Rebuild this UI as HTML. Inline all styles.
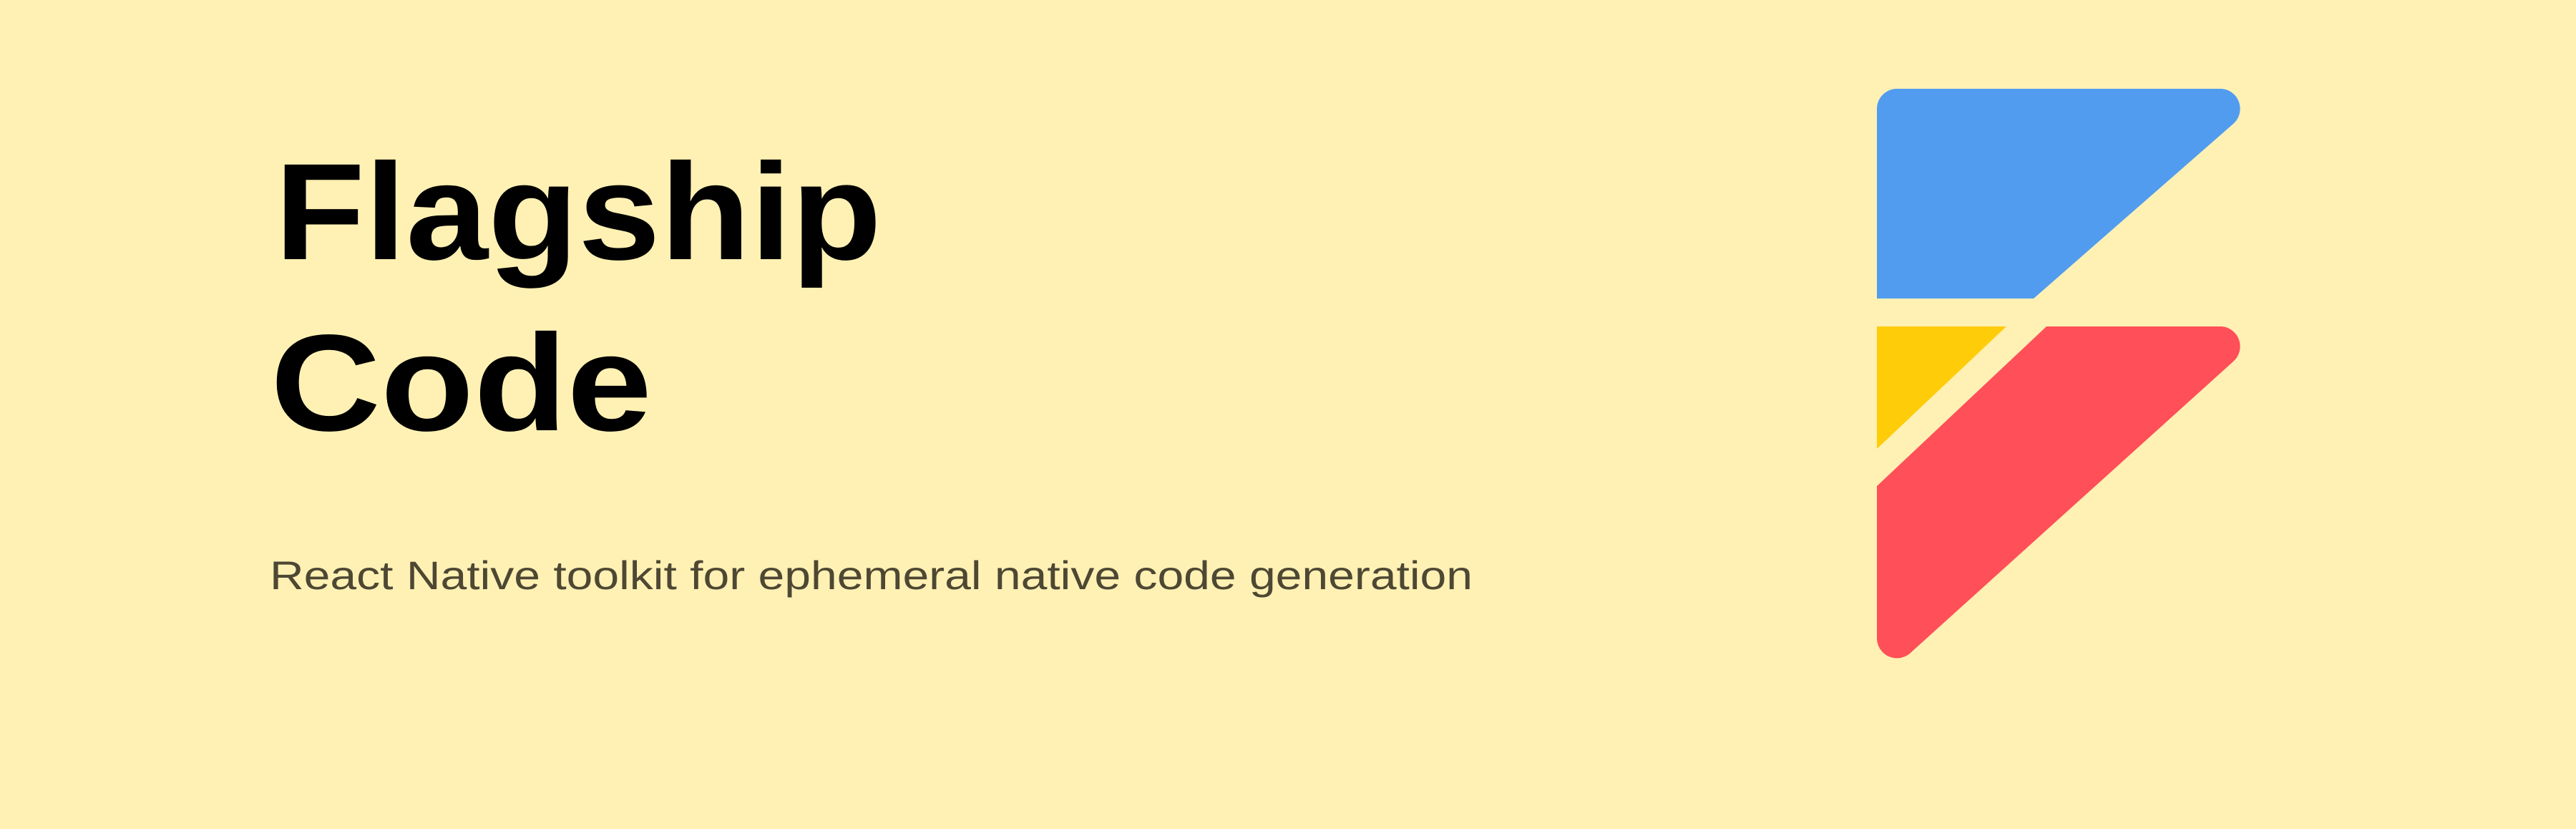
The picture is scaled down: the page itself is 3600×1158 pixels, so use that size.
<!DOCTYPE html>
<html><head><meta charset="utf-8"><style>
html,body{margin:0;padding:0;background:#fff1b4;}
svg{display:block}
</style></head><body>
<svg width="3600" height="1158" viewBox="0 0 3600 1158" xmlns="http://www.w3.org/2000/svg">
<rect width="3600" height="1158" fill="#fff1b4"/>
<text x="384" y="362" font-family="Liberation Sans, sans-serif" font-weight="bold" font-size="192" fill="#000" textLength="848" lengthAdjust="spacingAndGlyphs">Flagship</text>
<text x="378" y="601" font-family="Liberation Sans, sans-serif" font-weight="bold" font-size="192" fill="#000" textLength="533" lengthAdjust="spacingAndGlyphs">Code</text>
<text x="377" y="823" font-family="Liberation Sans, sans-serif" font-size="56" fill="#4d4733" textLength="1681" lengthAdjust="spacingAndGlyphs">React Native toolkit for ephemeral native code generation</text>
<path d="M3105,124 A28,28 0 0 1 3121,173 L2842,417 L2623,417 L2623,152 A28,28 0 0 1 2651,124 Z" fill="#529cef"/>
<path d="M2623,456 L2804,456 L2623,627 Z" fill="#ffcc0a"/>
<path d="M2860,456 L3105,456 A28,28 0 0 1 3121,505 L2671,911 A28,28 0 0 1 2623,891 L2623,679 Z" fill="#ff4f58"/>
</svg>
</body></html>
